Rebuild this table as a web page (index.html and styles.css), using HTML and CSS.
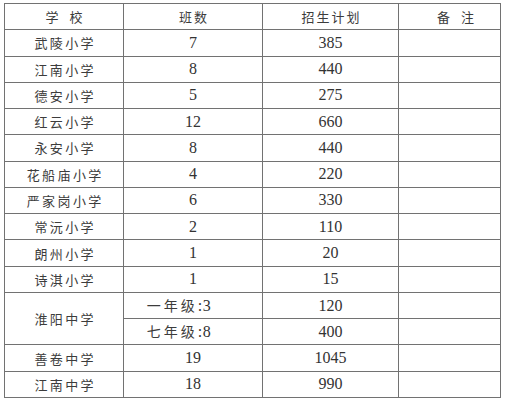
FILE: index.html
```html
<!DOCTYPE html>
<html lang="zh">
<head>
<meta charset="utf-8">
<title>招生计划</title>
<link rel="stylesheet" href="styles.css">
</head>
<body>
<table class="plan">
  <colgroup>
    <col class="c-school">
    <col class="c-class">
    <col class="c-plan">
    <col class="c-note">
  </colgroup>
  <thead>
    <tr>
      <th class="wide">学&nbsp;校</th>
      <th>班数</th>
      <th>招生计划</th>
      <th class="wide note">备&nbsp;注</th>
    </tr>
  </thead>
  <tbody>
    <tr><td class="name">武陵小学</td><td class="num">7</td><td class="num">385</td><td></td></tr>
    <tr><td class="name">江南小学</td><td class="num">8</td><td class="num">440</td><td></td></tr>
    <tr><td class="name">德安小学</td><td class="num">5</td><td class="num">275</td><td></td></tr>
    <tr><td class="name">红云小学</td><td class="num">12</td><td class="num">660</td><td></td></tr>
    <tr><td class="name">永安小学</td><td class="num">8</td><td class="num">440</td><td></td></tr>
    <tr><td class="name">花船庙小学</td><td class="num">4</td><td class="num">220</td><td></td></tr>
    <tr><td class="name">严家岗小学</td><td class="num">6</td><td class="num">330</td><td></td></tr>
    <tr><td class="name">常沅小学</td><td class="num">2</td><td class="num">110</td><td></td></tr>
    <tr><td class="name">朗州小学</td><td class="num">1</td><td class="num">20</td><td></td></tr>
    <tr><td class="name">诗淇小学</td><td class="num">1</td><td class="num">15</td><td></td></tr>
    <tr><td class="name" rowspan="2">淮阳中学</td><td class="grade">一年级<span class="num">:3</span></td><td class="num">120</td><td></td></tr>
    <tr><td class="grade">七年级<span class="num">:8</span></td><td class="num">400</td><td></td></tr>
    <tr><td class="name">善卷中学</td><td class="num">19</td><td class="num">1045</td><td></td></tr>
    <tr><td class="name">江南中学</td><td class="num">18</td><td class="num">990</td><td></td></tr>
  </tbody>
</table>
</body>
</html>
```

FILE: styles.css
```css
html, body {
  margin: 0;
  padding: 0;
  background: #ffffff;
}

body {
  padding: 3px 0 0 4px;
}

.plan {
  border-collapse: collapse;
  table-layout: fixed;
  width: 497px;
  color: #3c3c3c;
  font-family: "Noto Sans CJK SC", "Liberation Serif", serif;
  font-size: 13px;
  font-weight: 400;
}

.c-school { width: 119px; }
.c-class { width: 139px; }
.c-plan { width: 136px; }
.c-note { width: 102px; }

.plan th,
.plan td {
  border: 1px solid #727272;
  height: 26.27px;
  padding: 0;
  box-sizing: border-box;
  text-align: center;
  vertical-align: middle;
  line-height: 1;
  font-weight: 400;
}

.plan th {
  letter-spacing: 2px;
  text-indent: 2px;
}

.plan th.wide {
  letter-spacing: 4px;
  text-indent: 4px;
}

.plan th.note {
  padding-left: 12px;
}

.name {
  letter-spacing: 2.4px;
  text-indent: 2.4px;
}

.plan td.grade {
  font-size: 14px;
  letter-spacing: 3px;
  padding-right: 28px;
}

.num {
  font-family: "Liberation Serif", serif;
  font-size: 16px;
  color: #333333;
  letter-spacing: 0;
}

.grade .num {
  letter-spacing: 0.5px;
}
```
